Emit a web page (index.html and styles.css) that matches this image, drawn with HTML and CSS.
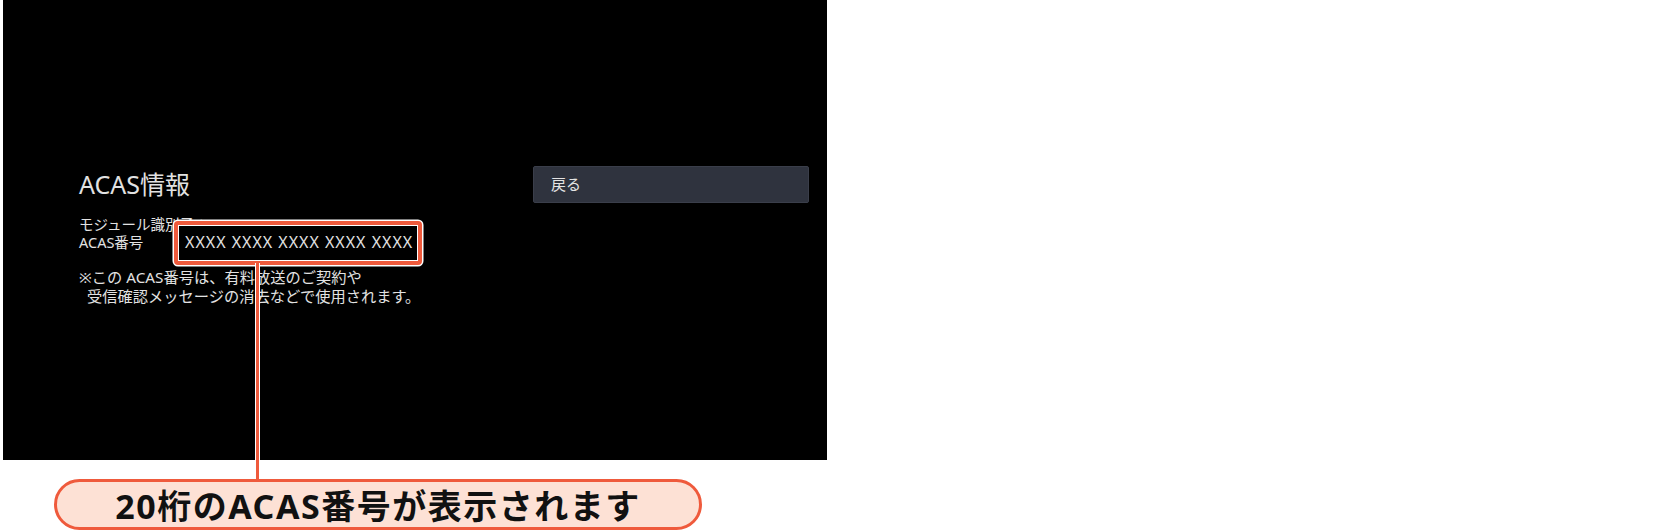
FILE: index.html
```html
<!DOCTYPE html>
<html lang="ja">
<head>
<meta charset="utf-8">
<title>ACAS情報</title>
<link rel="stylesheet" href="styles.css">
</head>
<body>
<div class="figure">
  <div class="screen">
    <section class="info">
      <h1 class="title">ACAS情報</h1>
      <div class="details">
        <div class="row">モジュール識別子：XXXX</div>
        <div class="row">
          <span class="label">ACAS番号</span>
          <span class="acas">XXXX XXXX XXXX XXXX XXXX</span>
        </div>
      </div>
      <p class="note">※この ACAS番号は、有料放送のご契約や<span class="note-cont">受信確認メッセージの消去などで使用されます。</span></p>
    </section>
    <nav class="menu">
      <div class="menu-item">戻る</div>
    </nav>
  </div>
  <div class="leader"></div>
  <div class="callout">20桁のACAS番号が表示されます</div>
</div>
</body>
</html>
```
FILE: styles.css
```css
*,
*::before,
*::after {
  box-sizing: border-box;
}

body {
  margin: 0;
  background: #fff;
  font-family: "Noto Sans", "Noto Sans CJK JP", sans-serif;
}

.figure {
  position: relative;
  width: 1654px;
  height: 531px;
}

/* TV screen */
.screen {
  margin-left: 3px;
  width: 824px;
  height: 460px;
  background: #000;
  display: flex;
  color: #e2e2e2;
}

.info {
  width: 530px;
  padding: 169px 0 0 76px;
}

.title {
  margin: 0;
  font-size: 25px;
  font-weight: 400;
  line-height: 30px;
}

.details {
  margin-top: 16px;
  font-size: 14.5px;
  line-height: 18px;
}

.row {
  display: flex;
}

.label {
  width: 106px;
}

/* highlighted ACAS number */
.acas {
  position: relative;
  z-index: 0;
  font-size: 16px;
  letter-spacing: 1px;
}

.acas::before {
  content: "";
  position: absolute;
  z-index: -1;
  left: -11px;
  top: -12px;
  width: 248px;
  height: 44px;
  border: 4px solid #ef5a3c;
  border-radius: 4px;
  background: #000;
  box-shadow: 0 0 0 1.5px #fff, inset 0 0 0 1px #fff;
}

.note {
  margin: 17px 0 0;
  font-size: 15.25px;
  line-height: 18.5px;
}

.note-cont {
  display: block;
  padding-left: 8px;
}

.menu {
  width: 276px;
  padding-top: 166px;
}

.menu-item {
  height: 37px;
  padding-left: 17px;
  background: #2f333e;
  border: 1px solid #3a3e4a;
  border-radius: 2px;
  font-size: 15px;
  line-height: 35px;
  color: #e4e4e4;
}

/* annotation */
.leader {
  position: absolute;
  left: 255px;
  top: 263px;
  width: 5px;
  height: 217px;
  background: #ef5a3c;
  border-left: 1px solid #fff;
  border-right: 1px solid #fff;
}

.callout {
  position: relative;
  margin: 19px 0 0 54px;
  width: 648px;
  height: 51px;
  border: 3px solid #ef5a3c;
  border-radius: 26px;
  background: #fde1d5;
  display: flex;
  align-items: center;
  justify-content: center;
  font-size: 34px;
  font-weight: 700;
  letter-spacing: 1.5px;
  color: #111;
}
```
